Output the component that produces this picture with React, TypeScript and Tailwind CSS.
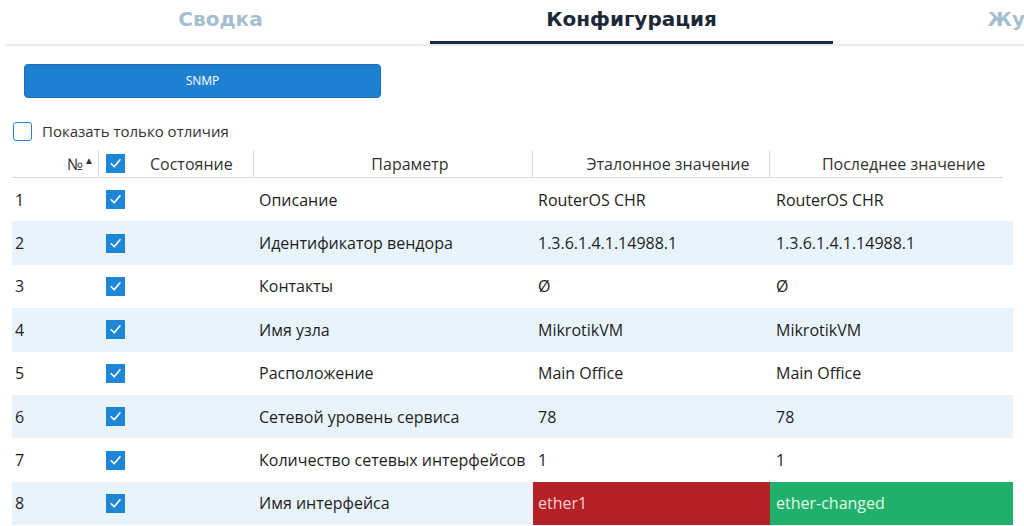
import React from "react";

const rows = [
  ["1", "Описание", "RouterOS CHR", "RouterOS CHR"],
  ["2", "Идентификатор вендора", "1.3.6.1.4.1.14988.1", "1.3.6.1.4.1.14988.1"],
  ["3", "Контакты", "Ø", "Ø"],
  ["4", "Имя узла", "MikrotikVM", "MikrotikVM"],
  ["5", "Расположение", "Main Office", "Main Office"],
  ["6", "Сетевой уровень сервиса", "78", "78"],
  ["7", "Количество сетевых интерфейсов", "1", "1"],
  ["8", "Имя интерфейса", "ether1", "ether-changed"],
];

function Check() {
  return (
    <div className="w-[19px] h-[19px] bg-[#1e86d6] flex items-center justify-center">
      <svg width="13" height="13" viewBox="0 0 13 13" fill="none">
        <path d="M2.2 6.8 L5.2 9.8 L11 2.8" stroke="white" strokeWidth="1.6" strokeLinecap="round" strokeLinejoin="round" />
      </svg>
    </div>
  );
}

export default function App() {
  const grid = "grid grid-cols-[87px_155px_279px_237px_243px]";
  return (
    <div className="w-[1024px] h-[526px] overflow-hidden bg-white text-[#1e1e1e]" style={{ fontFamily: '"Open Sans", "Noto Sans", sans-serif' }}>
      {/* Tabs */}
      <div className="relative h-[46px] overflow-hidden">
        <div className="flex h-[45px] ml-[27px] w-[1300px]" style={{ fontFamily: '"DejaVu Sans", sans-serif' }}>
          <div className="w-[403px] pr-[16px] flex items-start justify-center pt-[4px] text-[20px] font-bold text-[#a6bfcf]">Сводка</div>
          <div className="w-[403px] flex items-start justify-center pt-[4px] text-[20px] font-bold text-[#1b283a] relative">
            Конфигурация
            <div className="absolute left-0 right-0 bottom-[1px] h-[3px] bg-[#1b2a44]" />
          </div>
          <div className="w-[403px] flex items-start justify-center pt-[4px] text-[20px] font-bold text-[#a6bfcf]">Журнал</div>
        </div>
        <div className="absolute left-[5px] right-0 top-[44px] h-[2px] bg-[#ececec]" />
      </div>

      {/* SNMP button */}
      <div className="pl-[24px] pt-[18px]">
        <div className="w-[357px] h-[34px] rounded-[4px] bg-[#1f7fd1] border border-[#1a6fb8] flex items-center justify-center text-white text-[12px]">SNMP</div>
      </div>

      {/* Show only diffs */}
      <div className="flex items-center ml-[13px] mt-[24px] h-[19px] mb-[9px] gap-[10px]">
        <div className="w-[19px] h-[19px] rounded-[3px] border-[1.5px] border-[#2a86d4] bg-white" />
        <span className="text-[15px] text-[#333]">Показать только отличия</span>
      </div>

      {/* Table */}
      <div className="ml-[12px] w-[1001px]">
        <div className={`${grid} h-[28px] text-[16px] text-[#333] items-stretch`}>
          <div className="flex items-center justify-end pr-[4px] border-r border-[#dcdcdc] border-b border-b-[#d6d6d6]">
            <span>№</span>
            <span className="text-[10px] ml-[1px] -mt-[6px]">▲</span>
          </div>
          <div className="flex items-center pl-[7px] border-r border-[#dcdcdc] border-b border-b-[#d6d6d6]">
            <Check />
            <span className="ml-[25px]">Состояние</span>
          </div>
          <div className="flex items-center justify-center pl-[34px] border-r border-[#dcdcdc] border-b border-b-[#d6d6d6]">Параметр</div>
          <div className="flex items-center justify-center pl-[34px] border-r border-[#dcdcdc] border-b border-b-[#d6d6d6]">Эталонное значение</div>
          <div className="flex items-center justify-center pl-[34px] mr-[10px] border-b border-b-[#d6d6d6]">Последнее значение</div>
        </div>
        {rows.map((r, i) => {
          const diff = i === 7;
          return (
            <div key={r[0]} className={`${grid} h-[43.4px] text-[16px] ${i % 2 === 1 ? "bg-[#e9f3fc]" : "bg-white"}`}>
              <div className="flex items-center pl-[3px]">{r[0]}</div>
              <div className="flex items-center pl-[7px]"><Check /></div>
              <div className="flex items-center pl-[5px] whitespace-nowrap">{r[1]}</div>
              <div className={`flex items-center pl-[5px] ${diff ? "bg-[#b32126] text-[#f3cfcf]" : ""}`}>{r[2]}</div>
              <div className={`flex items-center pl-[6px] ${diff ? "bg-[#21b06b] text-[#e2f5e9]" : ""}`}>{r[3]}</div>
            </div>
          );
        })}
      </div>
    </div>
  );
}
